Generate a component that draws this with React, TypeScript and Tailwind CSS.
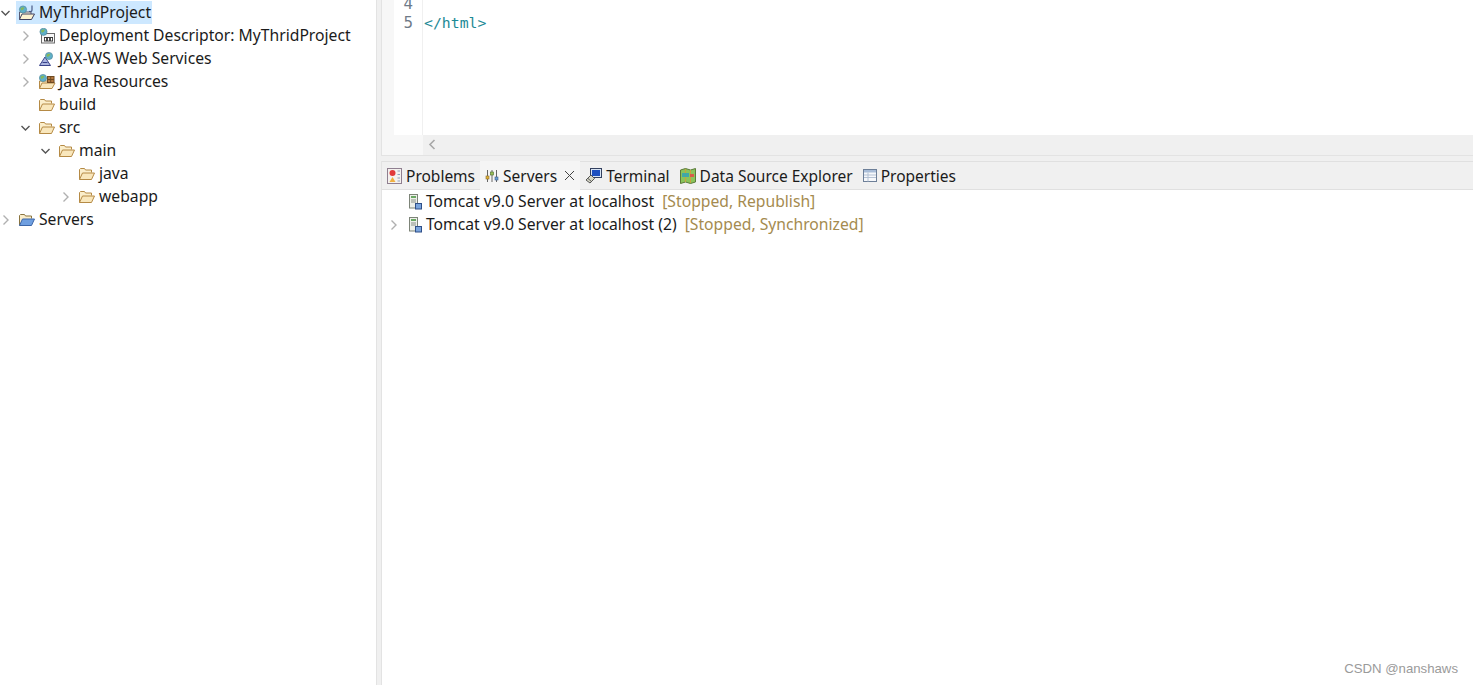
import type { ReactNode } from "react";

const sans = "font-['Noto_Sans',sans-serif]";

function Chevron({ open }: { open?: boolean }) {
  return (
    <svg width="9" height="10" viewBox="0 0 9 10" fill="none" className="shrink-0">
      {open ? (
        <path d="M0.5 3 L4.5 7 L8.5 3" stroke="#555" strokeWidth="1.4" />
      ) : (
        <path d="M2.5 0.5 L7 5 L2.5 9.5" stroke="#b0b0b0" strokeWidth="1.4" />
      )}
    </svg>
  );
}

function Folder({ blue }: { blue?: boolean }) {
  return (
    <svg width="16" height="14" viewBox="0 0 16 14" className="shrink-0">
      <path d="M0.5 12.5 V2.5 L1.5 1.5 H5.5 L6.5 3 H12.5 V5.5" fill="#fbeecb" stroke={blue ? "#8a7440" : "#b58a45"} />
      <path d="M0.5 12.5 L3.5 6 H15.5 L12.5 12.5 Z" fill={blue ? "#6f9fe0" : "#f9e7bc"} stroke={blue ? "#3c66a8" : "#b58a45"} />
    </svg>
  );
}

function Globe({ x, y }: { x: number; y: number }) {
  return (
    <>
      <circle cx={x} cy={y} r="3.6" fill="#5fb0c8" stroke="#4a8296" strokeWidth="0.6" />
      <path d={`M${x - 2.6} ${y - 1} q2 -2 4 -1 l-1 2 l-2 1 z`} fill="#86b85a" />
    </>
  );
}

function ProjectIcon() {
  return (
    <svg width="18" height="16" viewBox="0 0 18 16" className="-ml-px shrink-0">
      <path d="M1.5 14.5 V7 H13 V9" fill="#fdf6e0" stroke="#5a5a72" />
      <path d="M1.5 14.5 L4 9 H16.5 L13.5 14.5 Z" fill="#fdf3d0" stroke="#40405e" />
      <Globe x={5} y={4.5} />
      <path d="M14 0.5 V5 Q14 7 11 6.3" fill="none" stroke="#4a5a86" strokeWidth="1.2" />
    </svg>
  );
}

function DescriptorIcon() {
  return (
    <svg width="17" height="16" viewBox="0 0 17 16" className="shrink-0">
      <rect x="2.5" y="5.5" width="13" height="9.5" fill="#f8f8f8" stroke="#6a6a6a" />
      <Globe x={4.5} y={3.8} />
      <rect x="5" y="9" width="9" height="4.5" fill="#3a3a3a" />
      <path d="M6.5 10 V12.5 M9.5 10 V12.5 M12.5 10 V12.5" stroke="#fff" strokeWidth="1.2" />
    </svg>
  );
}

function WebServiceIcon() {
  return (
    <svg width="16" height="16" viewBox="0 0 16 16" className="shrink-0">
      <path d="M0.5 14.5 H11.5 L6 6 Z" fill="#aab4e0" stroke="#39428a" />
      <path d="M3.5 11.5 H8.5" stroke="#39428a" />
      <Globe x={10} y={5} />
    </svg>
  );
}

function ResourcesIcon() {
  return (
    <svg width="17" height="16" viewBox="0 0 17 16" className="shrink-0">
      <path d="M0.5 14.5 V7 H13 V9" fill="#fbeecb" stroke="#b58a45" />
      <path d="M0.5 14.5 L3 9 H16 L13 14.5 Z" fill="#f9e7bc" stroke="#b58a45" />
      <Globe x={4} y={4} />
      <rect x="8.5" y="2.5" width="6.5" height="6" fill="#b5793f" stroke="#6f4a22" />
      <path d="M8.5 5.5 H15 M11.7 2.5 V8.5" stroke="#6f4a22" />
    </svg>
  );
}

function ProblemsIcon() {
  return (
    <svg width="15" height="16" viewBox="0 0 15 16" className="shrink-0">
      <rect x="0.5" y="0.5" width="14" height="15" fill="#f4f1ee" stroke="#8f7f90" />
      <circle cx="5.5" cy="5" r="3" fill="#e23a3a" />
      <path d="M2.5 14 L5.5 9 L8.5 14 Z" fill="#f0b040" />
      <path d="M10.5 3 H13 M10.5 6.5 H13 M10.5 10 H13 M10.5 13 H13" stroke="#8fa0bc" />
    </svg>
  );
}

function ServersIcon() {
  return (
    <svg width="14" height="14" viewBox="0 0 14 14" className="shrink-0">
      <path d="M2.5 1 V13 M7 1 V13 M11.5 1 V13" stroke="#666" />
      <rect x="1" y="7" width="3" height="3" fill="#e2b53a" stroke="#8a6a2a" strokeWidth="0.6" />
      <rect x="5.5" y="3" width="3" height="3" fill="#9ac05a" stroke="#4a6a2a" strokeWidth="0.6" />
      <rect x="10" y="8" width="3" height="3" fill="#6aa0d8" stroke="#3a5a8a" strokeWidth="0.6" />
    </svg>
  );
}

function TerminalIcon() {
  return (
    <svg width="17" height="17" viewBox="0 0 17 17" className="shrink-0">
      <rect x="5.5" y="1.5" width="11" height="9" fill="#d8e4f4" stroke="#33405f" />
      <rect x="7" y="3" width="8" height="6" fill="#1d4fc0" />
      <path d="M1 13 L6 8 L9.5 11.5 L5 16 Z" fill="#d8d8c8" stroke="#555" />
      <path d="M3 11.5 L7 15" stroke="#555" />
    </svg>
  );
}

function MapIcon() {
  return (
    <svg width="16" height="16" viewBox="0 0 16 16" className="shrink-0">
      <path d="M0.5 2 L5.5 0.5 L10.5 2 L15.5 0.5 V14 L10.5 15.5 L5.5 14 L0.5 15.5 Z" fill="#8ac45a" stroke="#5a7a3a" />
      <path d="M5.5 1 V14 M10.5 2 V15" stroke="#c8a040" />
      <rect x="2" y="5" width="7" height="4" fill="#40a8a8" />
      <rect x="10" y="6" width="4" height="3" fill="#d85a4a" />
    </svg>
  );
}

function PropertiesIcon() {
  return (
    <svg width="14" height="13" viewBox="0 0 14 13" className="shrink-0">
      <rect x="0.5" y="0.5" width="13" height="12" fill="#f6f8fb" stroke="#6d7f98" />
      <rect x="1" y="1" width="12" height="2.5" fill="#a9bdd8" />
      <path d="M1 6 H13 M1 8.5 H13 M5 3.5 V12.5" stroke="#b5c2d4" />
    </svg>
  );
}

function ServerIcon() {
  return (
    <svg width="15" height="16" viewBox="0 0 15 16" className="shrink-0">
      <rect x="1.5" y="0.5" width="8" height="13.5" fill="#eef0ea" stroke="#7d8478" />
      <rect x="3" y="2" width="5" height="2" fill="#6aa864" />
      <path d="M3 6 H8 M3 8 H8" stroke="#8a9088" />
      <rect x="7.5" y="9.5" width="6" height="5.5" fill="#7aa4dc" stroke="#2f4f88" />
    </svg>
  );
}

type TreeRowProps = { indent: number; chevron?: "open" | "closed"; icon: ReactNode; selected?: boolean; children: string };

function TreeRow({ indent, chevron, icon, selected, children }: TreeRowProps) {
  return (
    <div className="flex h-[23px] items-center" style={{ paddingLeft: indent }}>
      <span className={`flex shrink-0 justify-start ${selected ? "w-[15px]" : "w-[16px]"}`}>{chevron && <Chevron open={chevron === "open"} />}</span>
      <span className={`flex h-[23px] items-center ${selected ? "bg-[#cde8ff] pl-px" : ""}`}>
        <span className="flex w-[22px] items-center pl-[2px]">{icon}</span>
        <span className="pr-px text-[15.7px] text-[#1b1b1b]">{children}</span>
      </span>
    </div>
  );
}

function Tab({ icon, label, active }: { icon: ReactNode; label: string; active?: boolean }) {
  return (
    <div className={`flex h-[29px] items-center gap-[4px] px-[5px] ${active ? "bg-[#f5f5f5]" : ""}`}>
      {icon}
      <span className="relative top-px text-[15.5px] text-[#1b1b1b]">{label}</span>
      {active && (
        <svg width="11" height="11" viewBox="0 0 11 11" className="ml-[3px]">
          <path d="M1 1 L10 10 M10 1 L1 10" stroke="#444" strokeWidth="1" />
        </svg>
      )}
    </div>
  );
}

function ServerRow({ chevron, name, state }: { chevron?: boolean; name: string; state: string }) {
  return (
    <div className="flex h-[23px] items-center pl-[7px]">
      <span className="flex w-[19px] shrink-0">{chevron && <Chevron />}</span>
      <ServerIcon />
      <span className="ml-[3px] text-[15.7px] text-[#1b1b1b]">{name}</span>
      <span className="ml-[8px] text-[15.7px] text-[#a58b4f]">{state}</span>
    </div>
  );
}

export default function App() {
  return (
    <div className={`relative flex h-[685px] w-[1473px] overflow-hidden bg-white ${sans}`}>
      {/* project explorer */}
      <aside className="w-[376px] shrink-0 pt-px">
        <TreeRow indent={1} chevron="open" icon={<ProjectIcon />} selected>MyThridProject</TreeRow>
        <TreeRow indent={21} chevron="closed" icon={<DescriptorIcon />}>Deployment Descriptor: MyThridProject</TreeRow>
        <TreeRow indent={21} chevron="closed" icon={<WebServiceIcon />}>JAX-WS Web Services</TreeRow>
        <TreeRow indent={21} chevron="closed" icon={<ResourcesIcon />}>Java Resources</TreeRow>
        <TreeRow indent={21} icon={<Folder />}>build</TreeRow>
        <TreeRow indent={21} chevron="open" icon={<Folder />}>src</TreeRow>
        <TreeRow indent={41} chevron="open" icon={<Folder />}>main</TreeRow>
        <TreeRow indent={61} icon={<Folder />}>java</TreeRow>
        <TreeRow indent={61} chevron="closed" icon={<Folder />}>webapp</TreeRow>
        <TreeRow indent={1} chevron="closed" icon={<Folder blue />}>Servers</TreeRow>
      </aside>

      <main className="flex min-w-0 flex-1 flex-col border-l border-[#e3e3e3] bg-[#f0f0f0] pl-[4px]">
        {/* editor */}
        <section className="flex h-[156px] shrink-0 flex-col border-b border-l border-[#e3e3e3] bg-[#f0f0f0]">
          <div className="flex h-[135px] shrink-0 bg-white">
            <div className="h-full w-[12px] shrink-0 bg-[#f7f7f7]" />
            <div className="flex h-full w-[29px] shrink-0 flex-col items-end border-r border-[#f0f0f0] pr-[9px] font-['DejaVu_Sans',sans-serif] text-[15px] leading-[19px] text-[#6e7a88]">
              <span className="-mt-[5px]">4</span>
              <span>5</span>
            </div>
            <div className="pl-[1px] pt-[13px] font-['DejaVu_Sans_Mono',monospace] text-[14.8px] leading-[19px] text-[#1d8a96]">
              &lt;/html&gt;
            </div>
          </div>
          <div className="flex h-[20px] flex-1 items-center bg-[#f0f0f0]">
            <div className="h-full w-[41px] shrink-0 bg-[#f7f7f7]" />
            <svg width="8" height="11" viewBox="0 0 8 11" className="-mt-[2px] ml-[5px]">
              <path d="M6.5 1 L2 5.5 L6.5 10" fill="none" stroke="#a8a8a8" strokeWidth="1.6" />
            </svg>
          </div>
        </section>

        {/* servers view */}
        <section className="mt-[5px] flex min-h-0 flex-1 flex-col border-l border-[#e3e3e3] bg-white">
          <div className="flex h-[29px] shrink-0 items-center border-t border-b border-[#e0e0e0] bg-[#f0f0f0]">
            <Tab icon={<ProblemsIcon />} label="Problems" />
            <Tab icon={<ServersIcon />} label="Servers" active />
            <Tab icon={<TerminalIcon />} label="Terminal" />
            <Tab icon={<MapIcon />} label="Data Source Explorer" />
            <Tab icon={<PropertiesIcon />} label="Properties" />
          </div>
          <div>
            <ServerRow name="Tomcat v9.0 Server at localhost" state="[Stopped, Republish]" />
            <ServerRow chevron name="Tomcat v9.0 Server at localhost (2)" state="[Stopped, Synchronized]" />
          </div>
        </section>
      </main>

      <span className="absolute bottom-[6px] right-[15px] font-['Liberation_Sans',sans-serif] text-[13.2px] text-[#9a9a9a]">CSDN @nanshaws</span>
    </div>
  );
}
